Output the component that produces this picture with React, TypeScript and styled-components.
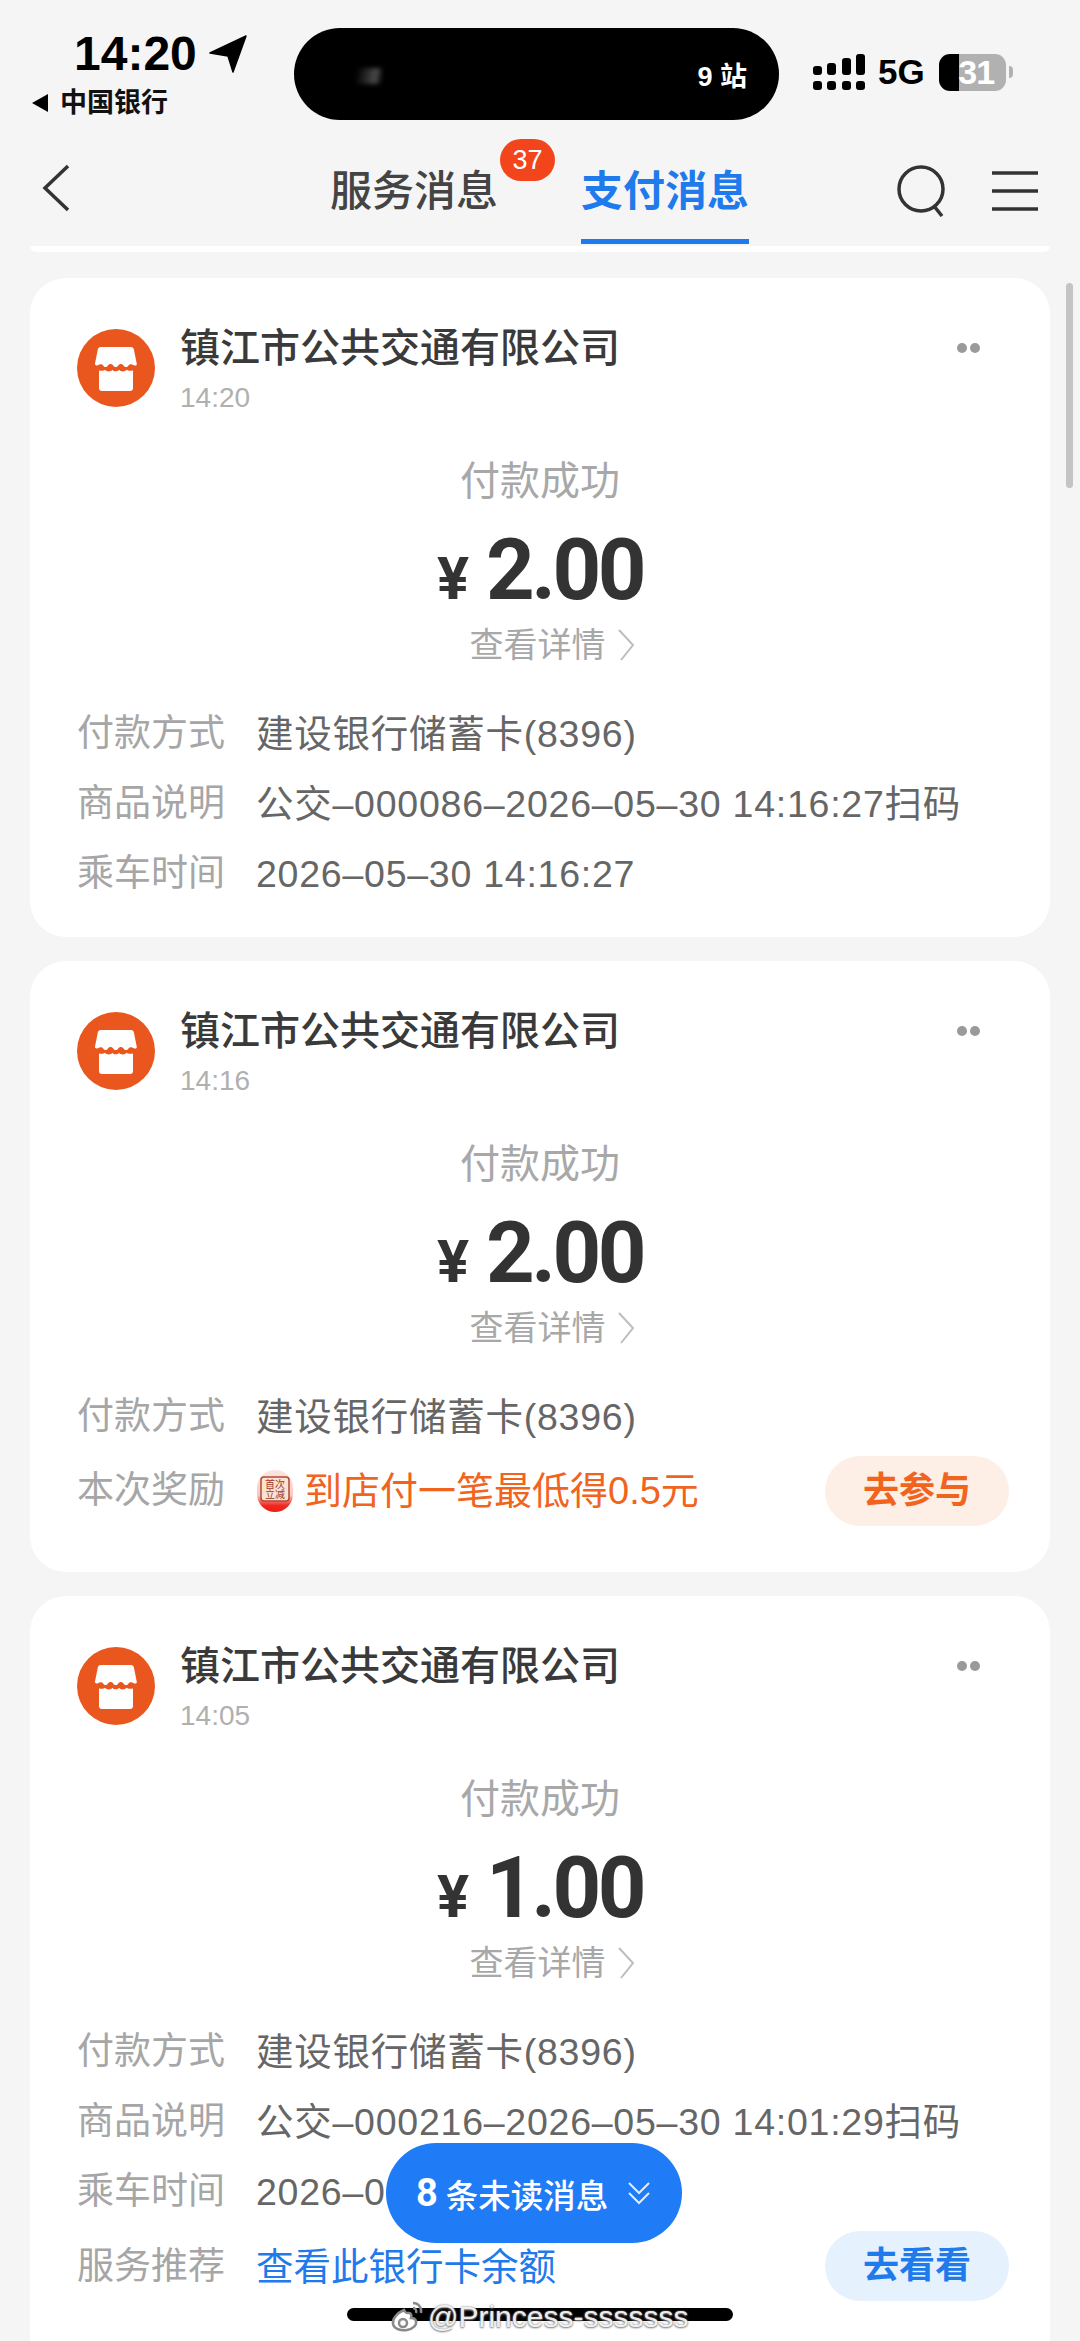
import styled, { createGlobalStyle } from 'styled-components';

const GlobalStyle = createGlobalStyle`
  html, body {
    margin: 0;
    padding: 0;
    background: #f5f5f5;
    font-family: 'Liberation Sans', 'Noto Sans CJK SC', sans-serif;
  }
`;

const Screen = styled.div`
  position: relative;
  width: 1080px;
  height: 2341px;
  overflow: hidden;
  background: #f5f5f5;
`;

/* status bar */
const StatusBar = styled.header`
  display: flex;
  height: 92px;
  padding-top: 28px;
`;

const StatusLeft = styled.div`
  width: 294px;
  flex-shrink: 0;
`;

const Clock = styled.div`
  display: flex;
  align-items: center;
  gap: 12px;
  margin: 0 0 0 74px;
  font-size: 48px;
  line-height: 52px;
  font-weight: 700;
  color: #000;
`;

const Carrier = styled.div`
  display: flex;
  align-items: center;
  gap: 12px;
  margin: 6px 0 0 32px;
  font-size: 27px;
  line-height: 34px;
  font-weight: 700;
  color: #111;
`;

const BackTriangle = styled.span`
  width: 0;
  height: 0;
  border-style: solid;
  border-width: 9px 16px 9px 0;
  border-color: transparent #000 transparent transparent;
`;

const Island = styled.div`
  display: flex;
  align-items: center;
  justify-content: space-between;
  width: 485px;
  height: 92px;
  padding: 0 32px 0 60px;
  box-sizing: border-box;
  border-radius: 46px;
  background: #000;
  color: #fff;
  font-size: 27px;
  font-weight: 700;
`;

const IslandSmudge = styled.span`
  width: 28px;
  height: 16px;
  margin-top: 4px;
  background: linear-gradient(100deg, #000 10%, #333 55%, #4a4a4a 75%, #000 100%);
  filter: blur(2px);
`;

const StatusRight = styled.div`
  display: flex;
  align-items: center;
  padding-left: 34px;
  height: 92px;
  margin-top: -2px;
`;

const Network = styled.span`
  margin: 0 14px 0 13px;
  font-size: 35px;
  font-weight: 700;
  color: #000;
`;

const Battery = styled.span`
  display: flex;
  align-items: center;
  justify-content: center;
  width: 67px;
  height: 37px;
  padding-left: 8px;
  box-sizing: border-box;
  border-radius: 11px;
  background: linear-gradient(90deg, #000 30%, #b1b1b1 30%);
  color: #fff;
  font-size: 34px;
  font-weight: 700;
  letter-spacing: -1px;
`;

const BatteryTip = styled.span`
  width: 4px;
  height: 12px;
  margin-left: 3px;
  border-radius: 0 6px 6px 0;
  background: #b1b1b1;
`;

/* nav */
const NavBar = styled.nav`
  display: flex;
  align-items: flex-start;
  height: 80px;
  padding: 44px 42px 0;
`;

const NavIcon = styled.svg`
  display: block;
  flex-shrink: 0;
  color: #333;
`;

const Tabs = styled.div`
  display: flex;
  gap: 83px;
  margin-left: 260px;
`;

const Tab = styled.div<{ $active?: boolean }>`
  position: relative;
  width: 168px;
  height: 80px;
  box-sizing: border-box;
  font-size: 42px;
  line-height: 56px;
  text-align: center;
  white-space: nowrap;
  font-weight: ${(p) => (p.$active ? 700 : 500)};
  color: ${(p) => (p.$active ? '#1f7aec' : '#444')};
  border-bottom: 5px solid ${(p) => (p.$active ? '#1f7aec' : 'transparent')};
`;

const Badge = styled.span`
  position: absolute;
  top: -25px;
  right: -57px;
  width: 55px;
  height: 42px;
  border-radius: 21px;
  background: #f2451c;
  color: #fff;
  font-size: 27px;
  font-weight: 400;
  line-height: 42px;
  text-align: center;
`;

const NavActions = styled.div`
  display: flex;
  align-items: center;
  gap: 45px;
  margin-left: auto;
  margin-top: 1px;
`;

const PeekEdge = styled.div`
  height: 6px;
  margin: 2px 30px 0;
  border-radius: 0 0 22px 22px;
  background: #fff;
`;

/* message list */
const List = styled.main`
  display: flex;
  flex-direction: column;
  gap: 24px;
  margin: 26px 30px 0;
`;

const Card = styled.article<{ $tail: number }>`
  padding: 48px 41px ${(p) => p.$tail}px;
  border-radius: 36px;
  background: #fff;
`;

const CardHead = styled.div`
  display: flex;
  align-items: flex-start;
  margin-left: 6px;
`;

const StoreIcon = styled.svg`
  display: block;
  flex-shrink: 0;
  margin: 3px 25px 0 0;
`;

const Merchant = styled.div`
  font-size: 40px;
  line-height: 44px;
  font-weight: 500;
  color: #3a3a3a;
`;

const SentAt = styled.div`
  margin-top: 10px;
  font-size: 28px;
  line-height: 36px;
  color: #b0b0b0;
  font-family: 'Liberation Sans', sans-serif;
`;

const MoreDots = styled.div`
  display: flex;
  gap: 3px;
  margin: 17px 29px 0 auto;

  &::before,
  &::after {
    content: '';
    width: 10px;
    height: 10px;
    border-radius: 50%;
    background: #9a9a9a;
  }
`;

const Summary = styled.div`
  display: flex;
  flex-direction: column;
  align-items: center;
  margin-top: 40px;
`;

const ResultText = styled.div`
  font-size: 40px;
  line-height: 50px;
  color: #a8a8a8;
`;

const Amount = styled.div`
  display: flex;
  align-items: baseline;
  gap: 17px;
  margin-top: 19px;
  height: 90px;
  line-height: 90px;
  color: #333;
`;

const Currency = styled.span`
  font-size: 60px;
  font-weight: 700;
  font-family: 'Roboto', sans-serif;
`;

const Figure = styled.span`
  font-size: 85px;
  font-weight: 700;
  font-family: 'Roboto', sans-serif;
  letter-spacing: -3.500px;
`;

const DetailLink = styled.div`
  display: flex;
  align-items: center;
  gap: 11px;
  margin: 8px 0 0 24px;
  font-size: 34px;
  line-height: 44px;
  color: #a8a8a8;
`;

const Rows = styled.div`
  margin: 32px 0 0 6px;
`;

const Row = styled.div<{ $pushed?: number }>`
  display: flex;
  align-items: center;
  height: 70px;
  margin-top: ${(p) => p.$pushed ?? 0}px;
  font-size: 37.5px;
  line-height: 44px;
  white-space: nowrap;
`;

const RowLabel = styled.span`
  width: 179px;
  flex-shrink: 0;
  font-size: 37px;
  color: #a6a6a6;
`;

const RowValue = styled.span`
  color: #666;
  letter-spacing: 0.75px;
`;

const RewardText = styled.span`
  font-size: 38px;
  color: #f0641e;
`;

const RewardIcon = styled.svg`
  display: block;
  flex-shrink: 0;
  margin: 0 11px 0 1px;
`;

const LinkText = styled.span`
  color: #1f7aec;
`;

const ActionButton = styled.span<{ $tone: 'orange' | 'blue' }>`
  display: flex;
  align-items: center;
  justify-content: center;
  flex-shrink: 0;
  width: 184px;
  height: 70px;
  margin: ${(p) => (p.$tone === 'orange' ? '0' : '-2px')} 0 0 auto;
  border-radius: 35px;
  font-size: 36px;
  font-weight: 700;
  background: ${(p) => (p.$tone === 'orange' ? '#fdeee6' : '#e5f1fd')};
  color: ${(p) => (p.$tone === 'orange' ? '#f0641e' : '#1f7aec')};
`;

/* overlays */
const ScrollThumb = styled.div`
  position: absolute;
  top: 283px;
  left: 1066px;
  width: 7px;
  height: 205px;
  border-radius: 4px;
  background: #c4c4c4;
`;

const UnreadPill = styled.div`
  position: absolute;
  top: 2143px;
  left: 386px;
  display: flex;
  align-items: center;
  width: 296px;
  height: 100px;
  padding-left: 30px;
  box-sizing: border-box;
  border-radius: 50px;
  background: #1f7bf6;
  color: #fff;
  font-size: 32.5px;
  font-weight: 500;
  white-space: nowrap;
`;

const UnreadCount = styled.b`
  margin-right: 8px;
  font-size: 38px;
  font-family: 'Roboto', sans-serif;
`;

const UnreadArrows = styled.svg`
  display: block;
  margin-left: 20px;
`;

const HomeBar = styled.div`
  position: absolute;
  top: 2308px;
  left: 347px;
  width: 386px;
  height: 13px;
  border-radius: 7px;
  background: #000;
`;

const Watermark = styled.div`
  position: absolute;
  top: 2295px;
  left: 390px;
  display: flex;
  align-items: center;
  gap: 4px;
  font-family: 'Liberation Sans', sans-serif;
  font-size: 30px;
  line-height: 44px;
  color: rgba(255, 255, 255, 0.9);
  text-shadow: 0 0 2px #777, 0 1px 2px #888;
  white-space: nowrap;
`;

type RowData = {
  label: string;
  value: string;
};

type Message = {
  time: string;
  amount: string;
  tail: number;
  rows: RowData[];
  reward?: boolean;
  service?: boolean;
};

const messages: Message[] = [
  {
    time: '14:20',
    amount: '2.00',
    tail: 28,
    rows: [
      { label: '付款方式', value: '建设银行储蓄卡(8396)' },
      { label: '商品说明', value: '公交–000086–2026–05–30 14:16:27扫码' },
      { label: '乘车时间', value: '2026–05–30 14:16:27' },
    ],
  },
  {
    time: '14:16',
    amount: '2.00',
    tail: 46,
    rows: [{ label: '付款方式', value: '建设银行储蓄卡(8396)' }],
    reward: true,
  },
  {
    // last card runs off the bottom of the screen
    time: '14:05',
    amount: '1.00',
    tail: 90,
    rows: [
      { label: '付款方式', value: '建设银行储蓄卡(8396)' },
      { label: '商品说明', value: '公交–000216–2026–05–30 14:01:29扫码' },
      { label: '乘车时间', value: '2026–05–30 14:01:29' },
    ],
    service: true,
  },
];

function Store() {
  return (
    <StoreIcon width="78" height="78" viewBox="0 0 78 78">
      <circle cx="39" cy="39" r="39" fill="#e9571f" />
      <path
        d="M24 18h30a3 3 0 0 1 2.800 2l3 15c0 1.500-1.500 2-3 1.200-2-1-4-1.500-5.300.4-1.300 2-3.700 2-5 0-1.300-2-4-2-5.300 0-1.300 2-3.700 2-5 0-1.300-2-4-2-5.300 0-1.300 2-3.400 2-4.700 0-1.300-1.900-3.300-1.400-5.300-.4-1.500.8-3-.3-3-1.200l3-15a3 3 0 0 1 2.800-2z"
        fill="#fff"
      />
      <path
        d="M22 41.500c2.500.5 4.500.5 6-.8 1.500 2.300 6 2.300 7.500 0 1 2 5 2 6.500 0 1.500 2.300 6 2.300 7.500 0 1.500 1.300 3.500 1.300 6.500.8V59a3 3 0 0 1-3 3H25a3 3 0 0 1-3-3z"
        fill="#fff"
      />
    </StoreIcon>
  );
}

function Reward() {
  return (
    <RewardIcon width="36" height="42" viewBox="0 0 36 42">
      <defs>
        <linearGradient id="rewardFill" x1="0" y1="0" x2="0" y2="1">
          <stop offset="0" stopColor="#fbe6df" />
          <stop offset="0.6" stopColor="#f8c9bd" />
          <stop offset="0.85" stopColor="#f0261f" />
          <stop offset="1" stopColor="#e8201a" />
        </linearGradient>
      </defs>
      <rect width="36" height="42" rx="18" fill="url(#rewardFill)" />
      <rect x="4" y="7" width="28" height="24" rx="3" fill="#fbe3cf" stroke="#b3483a" strokeWidth="1.500" />
      <text x="18" y="17.500" textAnchor="middle" fontSize="10" fill="#a5372a">
        首次
      </text>
      <text x="18" y="28" textAnchor="middle" fontSize="10" fill="#a5372a">
        立减
      </text>
    </RewardIcon>
  );
}

function MessageCard({ message }: { message: Message }) {
  return (
    <Card $tail={message.tail}>
      <CardHead>
        <Store />
        <div>
          <Merchant>镇江市公共交通有限公司</Merchant>
          <SentAt>{message.time}</SentAt>
        </div>
        <MoreDots />
      </CardHead>
      <Summary>
        <ResultText>付款成功</ResultText>
        <Amount>
          <Currency>¥</Currency>
          <Figure>{message.amount}</Figure>
        </Amount>
        <DetailLink>
          查看详情
          <svg width="18" height="32" viewBox="0 0 18 32" fill="none">
            <path d="M2 1l14 15L4 31" stroke="#bdbdbd" strokeWidth="2" />
          </svg>
        </DetailLink>
      </Summary>
      <Rows>
        {message.rows.map((row) => (
          <Row key={row.label}>
            <RowLabel>{row.label}</RowLabel>
            <RowValue>{row.value}</RowValue>
          </Row>
        ))}
        {message.reward && (
          <Row $pushed={4}>
            <RowLabel>本次奖励</RowLabel>
            <Reward />
            <RewardText>到店付一笔最低得0.5元</RewardText>
            <ActionButton $tone="orange">去参与</ActionButton>
          </Row>
        )}
        {message.service && (
          <Row $pushed={5}>
            <RowLabel>服务推荐</RowLabel>
            <LinkText>查看此银行卡余额</LinkText>
            <ActionButton $tone="blue">去看看</ActionButton>
          </Row>
        )}
      </Rows>
    </Card>
  );
}

export default function App(): JSX.Element {
  return (
    <Screen>
      <GlobalStyle />
      <StatusBar>
        <StatusLeft>
          <Clock>
            14:20
            <svg width="38" height="38" viewBox="0 0 38 38">
              <path d="M37 1L24 37l-5-16L1 18z" fill="#000" stroke="#000" strokeWidth="1.500" strokeLinejoin="round" />
            </svg>
          </Clock>
          <Carrier>
            <BackTriangle />
            中国银行
          </Carrier>
        </StatusLeft>
        <Island>
          <IslandSmudge />
          <span>9 站</span>
        </Island>
        <StatusRight>
          <svg width="52" height="37" viewBox="0 0 52 37" fill="#000">
            <rect x="0" y="12" width="9" height="9" rx="3" />
            <rect x="14" y="9" width="9" height="12" rx="3" />
            <rect x="29" y="4" width="9" height="17" rx="3" />
            <rect x="43" y="0" width="9" height="21" rx="3" />
            <rect x="0" y="27" width="9" height="9" rx="3" />
            <rect x="14" y="27" width="9" height="9" rx="3" />
            <rect x="29" y="27" width="9" height="9" rx="3" />
            <rect x="43" y="27" width="9" height="9" rx="3" />
          </svg>
          <Network>5G</Network>
          <Battery>31</Battery>
          <BatteryTip />
        </StatusRight>
      </StatusBar>

      <NavBar>
        <NavIcon width="28" height="48" viewBox="0 0 28 48" fill="none">
          <path d="M26 2L3 24l23 22" stroke="currentColor" strokeWidth="3.500" />
        </NavIcon>
        <Tabs>
          <Tab>
            服务消息
            <Badge>37</Badge>
          </Tab>
          <Tab $active>支付消息</Tab>
        </Tabs>
        <NavActions>
          <NavIcon width="50" height="52" viewBox="0 0 50 52" fill="none">
            <circle cx="24" cy="24" r="22" stroke="currentColor" strokeWidth="3.500" />
            <path d="M37 41l8 10" stroke="currentColor" strokeWidth="3.500" />
          </NavIcon>
          <NavIcon width="46" height="42" viewBox="0 0 46 42" fill="none">
            <path d="M0 3h46M0 21h46M0 39h46" stroke="currentColor" strokeWidth="3.500" />
          </NavIcon>
        </NavActions>
      </NavBar>

      <PeekEdge />

      <List>
        {messages.map((message) => (
          <MessageCard key={message.time} message={message} />
        ))}
      </List>

      <ScrollThumb />
      <HomeBar />
      <Watermark>
        <svg width="34" height="32" viewBox="0 0 34 32" fill="none" stroke="#8a8a8a" strokeWidth="2.500">
          <path d="M14 9C7 12 2 18 3 23c1 5 8 7 14 6 6-1 10-5 9-9-.5-2-3-3-5-3 1-3 0-5-2-5-2 0-3 1-5-3z" fill="#fff" />
          <circle cx="13" cy="22" r="4" />
          <path d="M23 2c5 0 9 4 8 10M23 7c2 0 4 2 3 5" />
        </svg>
        @Princess-sssssss
      </Watermark>
      <UnreadPill>
        <UnreadCount>8</UnreadCount>
        条未读消息
        <UnreadArrows width="22" height="24" viewBox="0 0 22 24" fill="none" stroke="#dfeeff" strokeWidth="2">
          <path d="M1 2l10 10L21 2M1 12l10 10 10-10" />
        </UnreadArrows>
      </UnreadPill>
    </Screen>
  );
}
